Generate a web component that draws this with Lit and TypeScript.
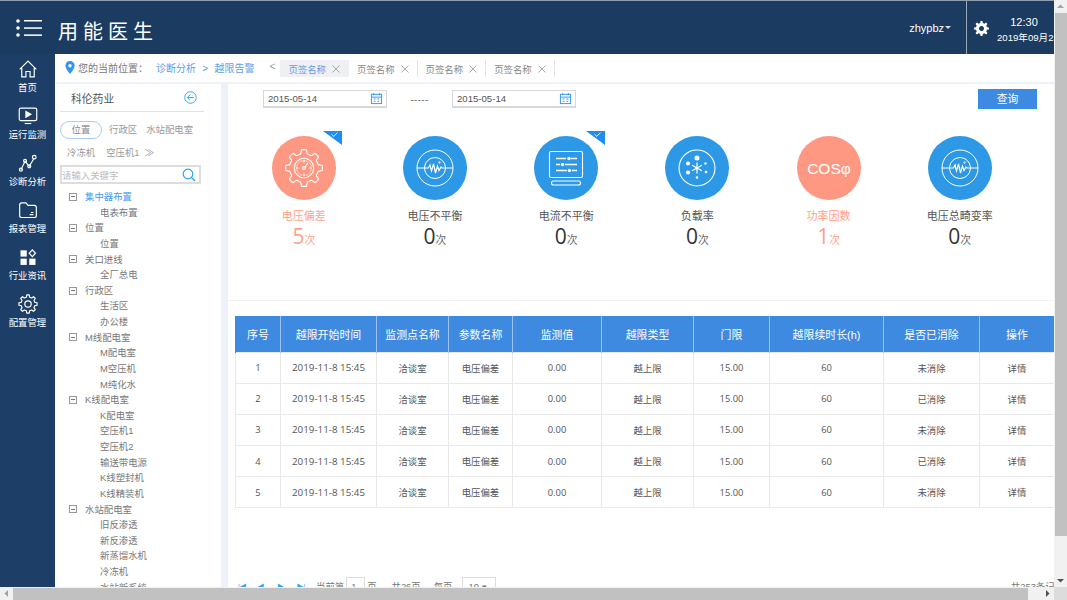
import { LitElement, html, css, svg } from "lit";
import { customElement } from "lit/decorators.js";

const gearPath = (cx: number, cy: number, ro: number, ri: number, n: number) => {
  const pts: string[] = [];
  for (let i = 0; i < n; i++) {
    const a = (i / n) * Math.PI * 2 - Math.PI / 2;
    const w = (Math.PI * 2) / n;
    const p = [[-0.3, ri], [-0.17, ro], [0.17, ro], [0.3, ri]] as const;
    for (const [o, r] of p) {
      const t = a + o * w;
      pts.push(`${(cx + Math.cos(t) * r).toFixed(2)} ${(cy + Math.sin(t) * r).toFixed(2)}`);
    }
  }
  return "M" + pts.join("L") + "Z";
};

const navIcons = [
  svg`<path d="M2 12.5 L12 2.5 L22 12.5 M4.5 10.5 V21.5 H9.5 V15 H14.5 V21.5 H19.5 V10.5" />`,
  svg`<rect x="1.5" y="2.5" width="21" height="15" rx="2"/><path d="M9.5 6.5 L15.5 10 L9.5 13.5Z" fill="#fff"/><path d="M8 21 H16"/>`,
  svg`<path d="M3.5 20 L8.5 10 L13.5 16 L19.5 6"/><circle cx="3.5" cy="20" r="1.8"/><circle cx="8.5" cy="9.5" r="1.8"/><circle cx="13.5" cy="16" r="1.8"/><circle cx="19.5" cy="5" r="2.2"/>`,
  svg`<path d="M2 6 Q2 3.5 4.5 3.5 H9.5 L12 6.5 H19.5 Q22 6.5 22 9 V18.5 Q22 21 19.5 21 H4.5 Q2 21 2 18.5Z"/><path d="M14 17.5 H18.5 M15.5 15 H18.5"/>`,
  svg`<g fill="#fff" stroke="none"><rect x="3" y="4" width="7.5" height="7.5"/><rect x="3" y="14" width="7.5" height="7.5"/><rect x="13.5" y="14" width="7.5" height="7.5"/></g><path d="M17.2 3.5 L21 7.5 L17.2 11.5 L13.4 7.5Z"/>`,
  svg`<path d=${gearPath(12, 12, 11, 8.4, 8)} stroke-linejoin="round"/><circle cx="12" cy="12" r="3.8"/>`,
];
const navLabels = ["首页", "运行监测", "诊断分析", "报表管理", "行业资讯", "配置管理"];

const tree: [string, string[]][] = [
  ["集中器布置", ["电表布置"]],
  ["位置", ["位置"]],
  ["关口进线", ["全厂总电"]],
  ["行政区", ["生活区", "办公楼"]],
  ["M线配电室", ["M配电室", "M空压机", "M纯化水"]],
  ["K线配电室", ["K配电室", "空压机1", "空压机2", "输送带电源", "K线塑封机", "K线精装机"]],
  ["水站配电室", ["旧反渗透", "新反渗透", "新蒸馏水机", "冷冻机", "水站新系统"]],
];

const wave = svg`<g fill="none" stroke="#fff" stroke-width="1"><circle cx="32" cy="32" r="18"/><circle cx="32" cy="32" r="10.5"/><path stroke-width="1.2" d="M14 32 H25.5 L27 29 L28.5 35 L30.5 28 L32.5 37 L34.5 30 L36 34.5 L38 31 L39 32 H50"/><circle cx="36.5" cy="26.5" r=".7"/></g>`;
const statIcons = [
  svg`<g fill="none" stroke="#fff" stroke-width="1.1"><path d=${gearPath(32, 32, 18.5, 14.5, 8)} stroke-linejoin="round"/><circle cx="32" cy="32" r="9.7"/><circle cx="32" cy="32" r="7.5" stroke-width=".5"/><circle cx="32" cy="32" r="1.4"/><path d="M33 31 L36 27 M32 24.5 V26.5 M24.5 32 H26.5 M37.5 32 H39.5 M32 37.5 V39.5"/></g>`,
  wave,
  svg`<g fill="none" stroke="#fff" stroke-width="1.1"><rect x="15.5" y="15.5" width="33" height="26" rx="1.5"/><rect x="17.5" y="45" width="29" height="4" rx="2"/><path d="M22 22.5 H32 M37 22.5 H43 M22 28.5 H26 M31 28.5 H43 M22 34.5 H33 M38 34.5 H43" stroke-width="1.4"/></g><g fill="#fff"><circle cx="35" cy="22.5" r="1.7"/><circle cx="28.5" cy="28.5" r="1.7"/><circle cx="35.5" cy="34.5" r="1.7"/></g>`,
  svg`<circle cx="32" cy="32" r="18" fill="none" stroke="#fff" stroke-width="1.1"/><path d="M32 26.5 V37.5 M27.2 29.2 L36.8 34.8 M27.2 34.8 L36.8 29.2" stroke="#fff" stroke-width="1.2"/><g fill="#fff"><circle cx="32" cy="22" r="2.5"/><circle cx="23" cy="27.5" r="2.1"/><circle cx="23" cy="36.5" r="2.1"/><circle cx="40.5" cy="27.5" r="1.2"/><circle cx="41" cy="36" r="1.3"/><circle cx="32" cy="41.5" r="1.3"/></g>`,
  null,
  wave,
];
const stats = [
  { name: "电压偏差", n: 5, warn: true, check: true },
  { name: "电压不平衡", n: 0, warn: false, check: false },
  { name: "电流不平衡", n: 0, warn: false, check: true },
  { name: "负载率", n: 0, warn: false, check: false },
  { name: "功率因数", n: 1, warn: true, check: false },
  { name: "电压总畸变率", n: 0, warn: false, check: false },
];
const cols = ["序号", "越限开始时间", "监测点名称", "参数名称", "监测值", "越限类型", "门限", "越限续时长(h)", "是否已消除", "操作"];
const rows = ["未消除", "已消除", "未消除", "已消除", "未消除"];

@customElement("app-root")
export class AppRoot extends LitElement {
  static styles = css`
    :host { display: block; width: 1067px; height: 600px; overflow: hidden; font-family: "Liberation Sans", "Noto Sans CJK SC", sans-serif; color: #666; background: #fff; }
    * { box-sizing: border-box; }
    .frame { display: grid; grid-template-columns: 1054px 13px; grid-template-rows: 587px 13px; width: 1067px; height: 600px; }
    .page { display: flex; flex-direction: column; overflow: hidden; min-width: 0; min-height: 0; }
    .top { flex: none; height: 54px; background: #1b3b60; border-top: 1px solid #8f9db0; display: flex; align-items: center; color: #fff; overflow: hidden; }
    .menu { margin-left: 16px; width: 26px; height: 20px; flex: none; display: block; margin-top: 1px; }
    .brand { margin-left: 16px; padding-top: 5px; font-size: 20px; letter-spacing: 5px; white-space: nowrap; font-family: "Noto Sans CJK SC", sans-serif; font-weight: 400; }
    .spacer { flex: 1; }
    .user { font-size: 11px; margin-right: 15px; display: flex; align-items: center; gap: 1px; }
    .caret { border: 3px solid transparent; border-top-color: #ddd; border-bottom: 0; width: 0; height: 0; }
    .sep { width: 1px; height: 53px; background: #9aa8ba; flex: none; }
    .cog { margin-left: 7px; margin-top: 1px; width: 15px; height: 15px; display: block; flex: none; }
    .clock { width: 65px; flex: none; overflow: hidden; text-align: center; white-space: nowrap; padding-top: 3px; }
    .clock div:first-child { font-size: 11px; line-height: 16px; padding-left: 5px; }
    .clock div:last-child { font-size: 9.6px; line-height: 14px; text-align: left; padding-left: 8px; margin-top: 1px; }
    .body { flex: 1; display: flex; min-height: 0; background: #fff; }
    .nav { flex: none; width: 55px; background: #1d3f67; padding-top: 4px; color: #fff; }
    .nav-item { height: 47px; display: flex; flex-direction: column; align-items: center; }
    .nav-item svg { width: 20px; height: 20px; display: block; margin-top: 1px; fill: none; stroke: #fff; stroke-width: 1.4; }
    .nav-item span { font-size: 9.4px; line-height: 13px; margin-top: 2px; white-space: nowrap; }
    .main { flex: 1; margin-left: 1px; min-width: 0; display: flex; flex-direction: column; background: #edf2f8; }
    .crumbs { flex: none; height: 28px; background: #fff; display: flex; align-items: center; font-size: 10px; white-space: nowrap; color: #777; padding-bottom: 1px; }
    .pin { width: 10px; height: 13px; margin-left: 9px; margin-right: 3px; display: block; flex: none; }
    .crumbs .link { color: #5f9ee6; margin-left: 8px; word-spacing: 3.5px; }
    .back { margin-left: 15px; width: 11px; color: #999; font-size: 10px; font-family: "Liberation Mono", monospace; }
    .tabs { display: flex; }
    .tab { width: 68.6px; height: 17px; display: flex; align-items: center; padding-left: 8px; font-size: 9.4px; color: #888; gap: 6px; margin-top: 2px; }
    .tab.on { background: #eef0f3; color: #5f9ee6; }
    .tab + .tab { border-right: 1px solid #e4e4e4; }
    .tab .x { width: 8px; height: 8px; display: block; stroke: #aaa; stroke-width: 1; flex: none; }
    .content { flex: 1; display: flex; gap: 7px; margin-top: 2px; min-height: 0; }
    .side { flex: none; width: 165px; background: #fff; padding: 0 4px; overflow: hidden; }
    .side-head { height: 28px; display: flex; align-items: center; justify-content: space-between; padding: 0 12px 0 11px; border-bottom: 1px solid #c9eafd; width: 144px; font-size: 10.8px; color: #555; }
    .side-head svg { width: 13px; height: 13px; display: block; margin-right: -5px; }
    .chips { display: flex; flex-wrap: wrap; font-size: 9.4px; color: #999; margin-top: 9px; align-items: center; width: 150px; }
    .chips span { line-height: 18px; white-space: nowrap; }
    .pill { width: 42px; height: 18px; border: 1px solid #a9cdf3; border-radius: 9px; text-align: center; line-height: 15px !important; color: #888; margin-right: 7px; }
    .c2 { margin-right: 9px; }
    .row2 { display: flex; font-size: 9.4px; color: #999; padding-left: 7px; margin-top: 5px; gap: 11px; line-height: 18px; white-space: nowrap; }
    .search { width: 141px; height: 19px; border: 2px solid #ddd; display: flex; align-items: center; justify-content: space-between; font-size: 9.4px; color: #bbb; margin-top: 3px; padding: 0 3px 0 0; }
    .search svg { width: 14px; height: 14px; display: block; }
    .tree { margin-top: 5px; font-size: 9.4px; color: #777; line-height: 15.63px; white-space: nowrap; }
    .node { display: flex; align-items: center; padding-left: 9px; height: 15.63px; gap: 8px; }
    .box { width: 8px; height: 8px; border: 1px solid #999; flex: none; }
    .box::after { content: ""; display: block; height: 1px; margin: 2.5px 1px 0; background: #777; }
    .node.on { color: #3f9bf0; }
    .leaf { padding-left: 40px; height: 15.63px; }
    .panel { flex: 1; background: #fff; min-width: 0; overflow: hidden; display: flex; flex-direction: column; }
    .tools { height: 26px; flex: none; display: flex; align-items: center; padding: 4px 17px 0 35px; font-size: 9.6px; color: #555; }
    .date { width: 124px; height: 18px; border: 1px solid #d8d8d8; border-bottom-width: 2px; display: flex; align-items: center; justify-content: space-between; padding: 0 3px 0 4px; }
    .date svg { width: 13px; height: 13px; display: block; }
    .dash { width: 65px; text-align: center; letter-spacing: .4px; }
    .query { margin-left: auto; width: 59px; height: 20px; background: #3d8ae0; border: 1px solid #2f8df0; color: #fff; font-size: 10.8px; text-align: center; line-height: 18px; }
    .stats { flex: none; display: grid; grid-template-columns: repeat(6, 131.2px); padding-left: 10.2px; height: 165px; margin-top: 26px; border-bottom: 1px solid #f2f2f2; }
    .stat { display: flex; flex-direction: column; align-items: center; position: relative; font-size: 11px; color: #555; }
    .stat.warn { color: #ff9f8c; }
    .circle { width: 64px; height: 64px; display: block; flex: none; border-radius: 50%; background: #2d98e6; }
    .warn .circle { background: #ff9883; }
    .badge { position: absolute; left: 85px; top: -5px; width: 19px; height: 14px; display: block; }
    .label { margin-top: 8px; line-height: 16px; white-space: nowrap; }
    .count { display: flex; align-items: baseline; line-height: 24px; color: #333; }
    .warn .count { color: #ff9f8c; }
    .count b { font-weight: 400; font-size: 21px; font-family: "Open Sans", "Liberation Sans", sans-serif; }
    .count span { font-size: 10.8px; color: #666; }
    .warn .count span { color: #ff9f8c; }
    .table-wrap { padding: 15px 0 0 7px; flex: none; }
    table { border-collapse: collapse; table-layout: fixed; width: 819px; font-size: 9.4px; color: #555; }
    th { background: #3e8ae1; color: #fff; font-weight: 400; font-size: 10.9px; height: 36px; padding: 0; border: 1px solid #9cc3ef; border-top: 0; border-bottom: 0; white-space: nowrap; overflow: hidden; }
    td { height: 31.2px; padding: 0; text-align: center; border: 1px solid #e9e9e9; white-space: nowrap; }
    th:first-child { border-left-color: #3e8ae1; }
    th:last-child { border-right-color: #3e8ae1; }
    td.t { font-family: "Open Sans", "Noto Sans CJK SC", sans-serif; }
    td.d { font-family: "Open Sans", "Noto Sans CJK SC", sans-serif; font-size: 9.8px; }
    .pager { flex: none; margin-top: 68px; padding-left: 10px; display: flex; align-items: center; font-size: 9.4px; color: #777; height: 20px; white-space: nowrap; }
    .pager i { font-style: normal; color: #39a3ee; width: 19.5px; font-size: 7px; }
    .pager .pg { border: 1px solid #ddd; width: 19px; height: 18px; margin: 0 2px; display: inline-block; padding-left: 4px; line-height: 17px; }
    .pager .sz { border: 1px solid #ddd; width: 34px; height: 18px; margin-left: 10px; padding-left: 5px; line-height: 17px; }
    .pager .tot { margin-left: auto; margin-right: -10px; }
    .vbar { background: #f1f1f1; display: flex; flex-direction: column; align-items: center; }
    .vbar .thumb { width: 12px; height: 523px; background: #c1c1c1; flex: none; margin-left: 1px; }
    .hbar { background: #f1f1f1; display: flex; align-items: center; }
    .hbar .thumb { height: 12px; width: 1015px; background: #c1c1c1; flex: none; }
    .ab { flex: none; width: 13px; height: 13px; display: block; fill: #a3a3a3; }
    .ab.dark { fill: #505050; }
    .tail { flex: 1; }
    .corner { background: #dcdcdc; }
  `;

  render() {
    return html`<div class="frame">
      <div class="page">
        <header class="top">
          <svg class="menu" viewBox="0 0 26 20" fill="#fff"><circle cx="2" cy="3" r="1.8"/><circle cx="2" cy="10" r="1.8"/><circle cx="2" cy="17" r="1.8"/><rect x="8" y="2" width="18" height="1.5"/><rect x="8" y="9.3" width="18" height="1.5"/><rect x="8" y="16.4" width="18" height="1.5"/></svg>
          <div class="brand">用能医生</div>
          <div class="spacer"></div>
          <div class="user">zhypbz<span class="caret"></span></div>
          <div class="sep"></div>
          <svg class="cog" viewBox="0 0 24 24"><path fill="#fff" fill-rule="evenodd" d=${gearPath(12, 12, 12, 9, 8) + "M12 8a4 4 0 1 0 .01 0Z"}/></svg>
          <div class="clock"><div>12:30</div><div>2019年09月23日</div></div>
        </header>
        <div class="body">
          <nav class="nav">
            ${navLabels.map((l, i) => html`<div class="nav-item"><svg viewBox="0 0 24 24">${navIcons[i]}</svg><span>${l}</span></div>`)}
          </nav>
          <div class="main">
            <div class="crumbs">
              <svg class="pin" viewBox="0 0 10 13"><path fill="#2f95ee" fill-rule="evenodd" d="M5 0a4.6 4.6 0 0 0-4.6 4.6C.4 8 5 13 5 13s4.6-5 4.6-8.4A4.6 4.6 0 0 0 5 0Zm0 3a1.7 1.7 0 1 1 0 3.4A1.7 1.7 0 0 1 5 3Z"/></svg>
              <span>您的当前位置：</span><span class="link">诊断分析 &gt; 越限告警</span>
              <span class="back">&lt;</span>
              <div class="tabs">
                ${[0, 1, 2, 3].map((i) => html`<div class="tab ${i === 0 ? "on" : ""}"><span>页签名称</span><svg class="x" viewBox="0 0 8 8"><path d="M.5.5 7.5 7.5M7.5.5.5 7.5"/></svg></div>`)}
              </div>
            </div>
            <div class="content">
              <aside class="side">
                <div class="side-head"><span>科伦药业</span>
                  <svg viewBox="0 0 14 14" fill="none" stroke="#2aa3ee" stroke-width="1"><circle cx="7" cy="7" r="6.2"/><path d="M10.5 7H3.7M6.6 4 3.6 7l3 3"/></svg>
                </div>
                <div class="chips"><span class="pill">位置</span><span class="c2">行政区</span><span>水站配电室</span></div>
                <div class="row2"><span>冷冻机</span><span>空压机1 &nbsp;≫</span></div>
                <div class="search"><span>请输入关键字</span>
                  <svg viewBox="0 0 14 14" fill="none" stroke="#2aa3ee" stroke-width="1.2"><circle cx="6" cy="6" r="4.8"/><path d="M9.5 9.5 13 13"/></svg>
                </div>
                <div class="tree">
                  ${tree.map(([p, ch], i) => html`<div class="node ${i === 0 ? "on" : ""}"><span class="box"></span><span>${p}</span></div>${ch.map((c) => html`<div class="leaf">${c}</div>`)}`)}
                </div>
              </aside>
              <section class="panel">
                <div class="tools">
                  ${this.date()}<span class="dash">-----</span>${this.date()}
                  <div class="query">查询</div>
                </div>
                <div class="stats">
                  ${stats.map((s, i) => html`<div class="stat ${s.warn ? "warn" : ""}">
                    <svg class="circle" viewBox="0 0 64 64">${statIcons[i] ?? svg`<text x="32" y="37.5" text-anchor="middle" fill="#fff" font-size="15.5" font-family="Liberation Sans, sans-serif">COSφ</text>`}</svg>
                    ${s.check ? html`<svg class="badge" viewBox="0 0 19 14"><path d="M0 0H19V14Z" fill="#1d8df2"/><path d="M8.5 3.2 10.8 5.4 14.5 1.6" fill="none" stroke="#fff" stroke-width=".9"/></svg>` : ""}
                    <div class="label">${s.name}</div>
                    <div class="count"><b>${s.n}</b><span>次</span></div>
                  </div>`)}
                </div>
                <div class="table-wrap">
                  <table>
                    <colgroup>${[45, 96, 72, 64, 89, 92, 76, 114, 96, 75].map((w) => html`<col style="width:${w}px">`)}</colgroup>
                    <thead><tr>${cols.map((c) => html`<th>${c}</th>`)}</tr></thead>
                    <tbody>${rows.map((r, i) => html`<tr>
                      <td class="t">${i + 1}</td><td class="d">2019-11-8 15:45</td><td>洽谈室</td><td>电压偏差</td><td class="t">0.00</td><td>越上限</td><td class="t">15.00</td><td class="t">60</td><td>${r}</td><td>详情</td>
                    </tr>`)}</tbody>
                  </table>
                </div>
                <div class="pager">
                  <i>|◀</i><i>◀</i><i>▶</i><i>▶|</i><span>当前第</span><span class="pg">1</span><span>页</span><span style="margin-left:15px">共26页</span><span style="margin-left:13px">每页</span><span class="sz">10 ▾</span><span class="tot">共253条记录</span>
                </div>
              </section>
            </div>
          </div>
        </div>
      </div>
      <div class="vbar">
        <svg class="ab" viewBox="0 0 13 13"><path d="M3 8 6.5 4.5 10 8Z"/></svg>
        <div class="thumb"></div><div class="tail"></div>
        <svg class="ab dark" viewBox="0 0 13 13"><path d="M3 5 6.5 8.5 10 5Z"/></svg>
      </div>
      <div class="hbar">
        <svg class="ab" viewBox="0 0 13 13"><path d="M8 3 4.5 6.5 8 10Z"/></svg>
        <div class="thumb"></div><div class="tail"></div>
        <svg class="ab dark" viewBox="0 0 13 13"><path d="M5 3 8.5 6.5 5 10Z"/></svg>
      </div>
      <div class="corner"></div>
    </div>`;
  }

  date() {
    return html`<div class="date"><span>2015-05-14</span>
      <svg viewBox="0 0 14 14" fill="none" stroke="#2f95ee"><rect x="1.5" y="2.5" width="11" height="10"/><path d="M1.5 5.5H12.5M4 1V3.5M10 1V3.5"/><path d="M4 7.5H6M8 7.5H10M4 10H6M8 10H10" stroke-width="1"/></svg>
    </div>`;
  }
}
